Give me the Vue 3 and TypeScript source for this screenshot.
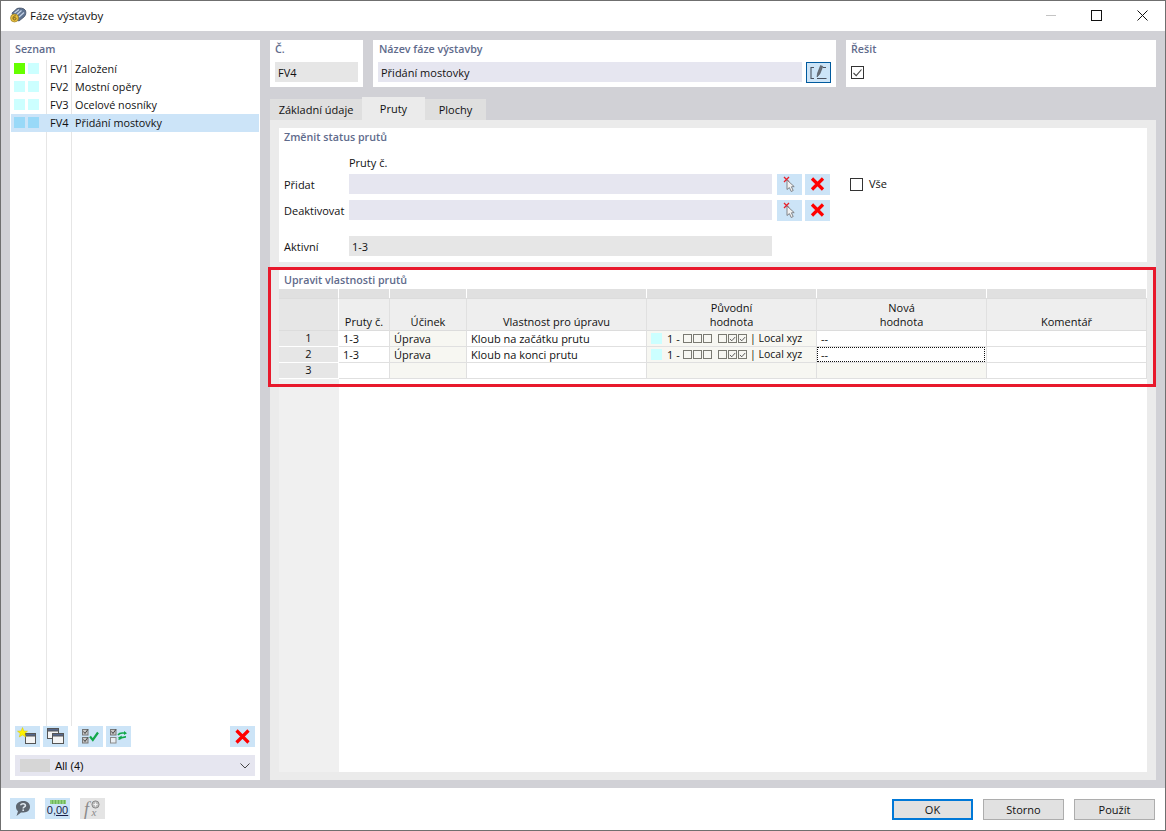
<script setup lang="ts">
interface Phase {
  code: string
  name: string
  first: string
  second: string
  selected?: boolean
}

interface MemberRow {
  no: number
  members: string
  effect: string
  property: string
  hasValue: boolean
  newValue: string
  focused?: boolean
}

const phases: Phase[] = [
  { code: 'FV1', name: 'Založení', first: '#66ff00', second: '#ccffff' },
  { code: 'FV2', name: 'Mostní opěry', first: '#ccffff', second: '#ccffff' },
  { code: 'FV3', name: 'Ocelové nosníky', first: '#ccffff', second: '#ccffff' },
  { code: 'FV4', name: 'Přidání mostovky', first: '#99d9f8', second: '#99d9f8', selected: true },
]

const memberRows: MemberRow[] = [
  { no: 1, members: '1-3', effect: 'Úprava', property: 'Kloub na začátku prutu', hasValue: true, newValue: '--' },
  { no: 2, members: '1-3', effect: 'Úprava', property: 'Kloub na konci prutu', hasValue: true, newValue: '--', focused: true },
  { no: 3, members: '', effect: '', property: '', hasValue: false, newValue: '' },
]

const releaseLeft = [false, false, false]
const releaseRight = [false, true, true]
const pickRows = ['Přidat', 'Deaktivovat']
</script>

<template>
  <div class="window">
    <header class="titlebar">
      <svg class="app-icon" width="18" height="16" viewBox="0 0 18 16">
        <path d="M3 6 L8 1.5 C11 0.5 15 1 16.5 3.5 C17.5 6 16.5 8.5 15 10 L10 14 L5 12 Z" fill="#5f7391" stroke="#39465c" stroke-width="0.7" />
        <path d="M5.5 6 L10 2.5 M7.5 8 L12.5 3.5 M10 10 L15 5.5" stroke="#c3d2e6" stroke-width="1.3" />
        <circle cx="5.5" cy="11" r="4" fill="#e8bf3e" stroke="#8f7420" stroke-width="0.6" />
        <path d="M6.8 8.8 C4.8 8.6 4 10 4 11.4 C4 13.4 7 13.4 7 11.6 C7 10.2 4.8 10.4 4.2 11.4" fill="none" stroke="#6b5512" stroke-width="0.9" />
      </svg>
      <span class="title-text">Fáze výstavby</span>
      <div class="win-controls">
        <span class="win-min"></span>
        <span class="win-max"></span>
        <svg class="win-close" width="11" height="11" viewBox="0 0 11 11">
          <path d="M0.5 0.5 L10.5 10.5 M10.5 0.5 L0.5 10.5" stroke="#111" stroke-width="1" />
        </svg>
      </div>
    </header>

    <main class="body">
      <aside class="list-panel">
        <div class="group-title list-title">Seznam</div>
        <div class="list">
          <div v-for="p in phases" :key="p.code" class="list-row" :class="{ selected: p.selected }">
            <span class="swatches">
              <i :style="{ background: p.first }"></i>
              <i :style="{ background: p.second }"></i>
            </span>
            <span class="list-code">{{ p.code }}</span>
            <span class="list-name">{{ p.name }}</span>
          </div>
        </div>
        <div class="list-tools">
          <button class="tool">
            <svg width="25" height="21" viewBox="0 0 25 21">
              <rect x="10.5" y="7.5" width="10" height="10" fill="#f4f4f4" stroke="#555" />
              <rect x="10.5" y="7.5" width="10" height="2.5" fill="#56688c" stroke="#555" />
              <path d="M7.5 1.5 L8.9 5 L12.5 5.2 L9.8 7.4 L10.7 11 L7.5 9 L4.3 11 L5.2 7.4 L2.5 5.2 L6.1 5 Z" fill="#fff200" stroke="#d6c400" stroke-width="0.5" />
            </svg>
          </button>
          <button class="tool">
            <svg width="25" height="21" viewBox="0 0 25 21">
              <rect x="4.5" y="2.5" width="11" height="10" fill="#f4f4f4" stroke="#555" />
              <rect x="4.5" y="2.5" width="11" height="2.5" fill="#56688c" stroke="#555" />
              <rect x="9.5" y="7.5" width="11" height="10" fill="#f4f4f4" stroke="#555" />
              <rect x="9.5" y="7.5" width="11" height="2.5" fill="#56688c" stroke="#555" />
            </svg>
          </button>
          <button class="tool tool-gap">
            <svg width="25" height="21" viewBox="0 0 25 21">
              <rect x="4.5" y="3.5" width="5.5" height="5.5" fill="#c8c8c8" stroke="#777" />
              <rect x="4.5" y="11.5" width="5.5" height="5.5" fill="#c8c8c8" stroke="#777" />
              <path d="M5.5 5.5 L7 7.5 L9.8 3.5 M5.5 13.5 L7 15.5 L9.8 11.5" fill="none" stroke="#333" stroke-width="0.9" />
              <path d="M12 10.5 L14.8 14 L20 6.5" fill="none" stroke="#12a84a" stroke-width="2.2" />
            </svg>
          </button>
          <button class="tool">
            <svg width="25" height="21" viewBox="0 0 25 21">
              <rect x="4.5" y="3.5" width="5.5" height="5.5" fill="#c8c8c8" stroke="#777" />
              <rect x="4.5" y="11.5" width="5.5" height="5.5" fill="#e8eef2" stroke="#8a8a8a" />
              <path d="M5.5 5.5 L7 7.5 L9.8 3.5" fill="none" stroke="#333" stroke-width="0.9" />
              <path d="M12 9 C14 6 16 7 19 7.2 M20 10.8 C17 11 15 11 12.5 13.5" fill="none" stroke="#12a84a" stroke-width="1.6" />
              <path d="M18 5 L21 7.2 L18 9 Z M16 9.5 L12 11.5 L15 13.5 Z" fill="#12a84a" />
            </svg>
          </button>
          <button class="tool tool-end">
            <svg width="25" height="21" viewBox="0 0 25 21">
              <path d="M6.5 4.5 L18.5 16.5 M18.5 4.5 L6.5 16.5" stroke="#f00" stroke-width="3.2" />
            </svg>
          </button>
        </div>
        <div class="filter">
          <span class="filter-swatch"></span>
          <span class="filter-text">All (4)</span>
          <svg class="chevron" width="10" height="6" viewBox="0 0 10 6">
            <path d="M0.5 0.5 L5 5 L9.5 0.5" fill="none" stroke="#444" />
          </svg>
        </div>
      </aside>

      <section class="detail">
        <div class="top-row">
          <div class="top-box box-no">
            <div class="group-title">Č.</div>
            <div class="field field-ro">FV4</div>
          </div>
          <div class="top-box box-name">
            <div class="group-title name-title">Název fáze výstavby</div>
            <div class="name-line">
              <div class="field field-edit name-field">Přidání mostovky</div>
              <button class="edit-btn">
                <svg width="21" height="17" viewBox="0 0 21 17">
                  <path d="M6 3.5 H3 V14.5 H6 M9 14.5 H18.5 M15 3.5 H18" fill="none" stroke="#4a5260" stroke-width="1.1" />
                  <path d="M9 13 L9.6 9 L12.5 1.5 L14.8 2.4 L11.8 10 Z" fill="#6b7078" stroke="#3a3f46" stroke-width="0.5" />
                </svg>
              </button>
            </div>
          </div>
          <div class="top-box box-solve">
            <div class="group-title">Řešit</div>
            <span class="check check-on">
              <svg width="11" height="11" viewBox="0 0 11 11">
                <path d="M1.5 6 L4.2 8.6 L9.5 2.5" fill="none" stroke="#444" stroke-width="1.1" />
              </svg>
            </span>
          </div>
        </div>

        <nav class="tabs">
          <span class="tab tab-first">Základní údaje</span>
          <span class="tab tab-active">Pruty</span>
          <span class="tab tab-last">Plochy</span>
        </nav>

        <div class="tab-page">
          <div class="status-panel">
            <div class="group-title">Změnit status prutů</div>
            <div class="column-label">Pruty č.</div>
            <div class="pick-block">
              <div class="pick-rows">
                <div v-for="label in pickRows" :key="label" class="pick-row">
                  <span class="row-label">{{ label }}</span>
                  <div class="field field-edit wide-field"></div>
                  <button class="pick-btn">
                    <svg width="25" height="21" viewBox="0 0 25 21">
                      <path d="M7 3 L12 8 M12 3 L7 8" stroke="#e8202a" stroke-width="1.3" />
                      <path d="M10 6 L10 15.5 L12.4 13.6 L14.2 17.5 L16.2 16.5 L14.4 12.8 L17.2 12.6 Z" fill="#f2f2f2" stroke="#77797d" stroke-width="0.9" />
                    </svg>
                  </button>
                  <button class="pick-btn">
                    <svg width="25" height="21" viewBox="0 0 25 21">
                      <path d="M7 4.5 L18 15.5 M18 4.5 L7 15.5" stroke="#f00" stroke-width="3.2" />
                    </svg>
                  </button>
                </div>
              </div>
              <label class="all-check">
                <span class="check"></span>
                <span class="all-text">Vše</span>
              </label>
            </div>
            <div class="pick-row active-row">
              <span class="row-label">Aktivní</span>
              <div class="field field-ro wide-field">1-3</div>
            </div>
          </div>

          <div class="edit-panel">
            <div class="group-title">Upravit vlastnosti prutů</div>
            <div class="grid">
              <div class="band band-corner"></div>
              <div v-for="n in 6" :key="n" class="band"></div>

              <div class="head head-corner"></div>
              <div class="head">Pruty č.</div>
              <div class="head">Účinek</div>
              <div class="head">Vlastnost pro úpravu</div>
              <div class="head">Původní<br />hodnota</div>
              <div class="head">Nová<br />hodnota</div>
              <div class="head">Komentář</div>

              <template v-for="row in memberRows" :key="row.no">
                <div class="row-no">{{ row.no }}</div>
                <div class="cell">{{ row.members }}</div>
                <div class="cell tinted">{{ row.effect }}</div>
                <div class="cell">{{ row.property }}</div>
                <div class="cell tinted value-cell">
                  <template v-if="row.hasValue">
                    <i class="value-swatch"></i>
                    <span class="value-no">1 -</span>
                    <span class="mini-group">
                      <span v-for="(on, i) in releaseLeft" :key="i" class="mini" :class="{ on }"></span>
                    </span>
                    <span class="mini-group mini-second">
                      <span v-for="(on, i) in releaseRight" :key="i" class="mini" :class="{ on }">
                        <svg v-if="on" width="8" height="8" viewBox="0 0 8 8">
                          <path d="M1 4 L3.2 6 L7 1.8" fill="none" stroke="#444" />
                        </svg>
                      </span>
                    </span>
                    <span class="value-text">| Local xyz</span>
                  </template>
                </div>
                <div class="cell" :class="{ tinted: !row.hasValue }">
                  <span v-if="row.focused" class="focus-cell">{{ row.newValue }}</span>
                  <template v-else>{{ row.newValue }}</template>
                </div>
                <div class="cell"></div>
              </template>
            </div>
            <div class="grid-rest"></div>
            <div class="highlight"></div>
          </div>
        </div>
      </section>
    </main>

    <footer class="footer">
      <button class="tool">
        <svg width="25" height="21" viewBox="0 0 25 21">
          <path d="M13.5 3 C17.5 3 20 5.5 20 8.8 C20 12.2 17.5 14.5 13.5 14.5 L11 14.5 L6.5 18 L8 13.2 C6.5 12 6 10.5 6 8.8 C6 5.5 9 3 13.5 3 Z" fill="#5d6670" />
          <path d="M10.8 7.2 C10.8 5.2 15.4 5.2 15.4 7.4 C15.4 9 13.2 8.8 13.2 10.4" fill="none" stroke="#dfe8f0" stroke-width="1.6" />
          <circle cx="13.2" cy="12.2" r="0.9" fill="#dfe8f0" />
        </svg>
      </button>
      <button class="tool units">
        <span class="ruler"></span>
        <span class="units-text">0,<u>00</u></span>
      </button>
      <button class="tool tool-off">
        <svg width="25" height="21" viewBox="0 0 25 21">
          <circle cx="15.5" cy="6.5" r="3.6" fill="#bdbdbd" stroke="#8a8a8a" />
          <path d="M13.5 6.5 H17.5 M15.5 4.5 V8.5" stroke="#f2f2f2" />
          <text x="4" y="17" class="fx-text">f</text>
          <text x="11.5" y="18" class="fx-text fx-small">x</text>
        </svg>
      </button>
      <div class="actions">
        <button class="action action-default">OK</button>
        <button class="action">Storno</button>
        <button class="action">Použít</button>
      </div>
    </footer>
  </div>
</template>

<style>
html,
body {
  margin: 0;
  background: #fff;
}
</style>

<style scoped>
.window {
  width: 1166px;
  height: 831px;
  box-sizing: border-box;
  border: 1px solid #6f6f6f;
  display: flex;
  flex-direction: column;
  background: #fff;
  font-family: "Open Sans", "Noto Sans", sans-serif;
  font-size: 11px;
  color: #111;
  overflow: hidden;
}
button {
  padding: 0;
  border: 0;
  font: inherit;
  color: inherit;
}
.titlebar {
  height: 30px;
  flex: none;
  display: flex;
  align-items: center;
  padding: 0 0 2px 8px;
  box-sizing: border-box;
}
.app-icon {
  margin-right: 3px;
}
.title-text {
  font-size: 11.5px;
}
.win-controls {
  margin-left: auto;
  display: flex;
  align-items: center;
  margin-right: 17px;
}
.win-min {
  width: 10px;
  height: 1px;
  background: #c4c4c4;
  margin-right: 35px;
}
.win-max {
  width: 9px;
  height: 9px;
  border: 1px solid #111;
  margin-right: 35px;
}
.body {
  flex: 1;
  min-height: 0;
  display: flex;
  gap: 10px;
  padding: 9px 9px 8px;
  background: #d1d1d6;
}
.group-title {
  color: #5f6b8c;
  font-weight: 600;
  font-size: 10.7px;
  line-height: 14px;
}
.list-panel {
  width: 250px;
  flex: none;
  background: #fff;
  display: flex;
  flex-direction: column;
  padding: 2px 5px 4px;
  box-sizing: border-box;
}
.list-title {
  height: 18px;
  line-height: 14px;
}
.list {
  flex: 1;
  margin: 0 -4px;
  background:
    linear-gradient(#e6e6e6, #e6e6e6) 35px 0 / 1px 100% no-repeat,
    linear-gradient(#e6e6e6, #e6e6e6) 60px 0 / 1px 100% no-repeat;
}
.list-row {
  height: 18px;
  display: flex;
  align-items: center;
  padding-bottom: 2px;
  box-sizing: border-box;
}
.list-row.selected {
  background: #cce4f8;
}
.swatches {
  width: 39px;
  display: flex;
  gap: 3px;
  padding-left: 3px;
  box-sizing: border-box;
}
.swatches i {
  width: 11px;
  height: 11px;
}
.list-code {
  width: 25px;
}
.list-name {
  font-size: 10.8px;
}
.list-tools {
  display: flex;
  gap: 3px;
  margin-bottom: 8px;
}
.tool {
  width: 25px;
  height: 21px;
  flex: none;
  background: #cce4f7;
  display: flex;
  align-items: center;
  justify-content: center;
}
.tool-gap {
  margin-left: 7px;
}
.tool-end {
  margin-left: auto;
}
.filter {
  height: 21px;
  background: #e6e6f0;
  display: flex;
  align-items: center;
  padding: 0 5px 0 5px;
}
.filter-swatch {
  width: 30px;
  height: 13px;
  background: #d6d6d6;
  margin-right: 5px;
}
.filter-text {
  font-family: "Liberation Sans", sans-serif;
  font-size: 11px;
}
.chevron {
  margin-left: auto;
}
.detail {
  flex: 1;
  min-width: 0;
  display: flex;
  flex-direction: column;
}
.top-row {
  display: flex;
  gap: 10px;
  height: 47px;
  flex: none;
}
.top-box {
  background: #fff;
  box-sizing: border-box;
  padding: 2px 5px 0;
}
.box-no {
  width: 93px;
}
.box-name {
  width: 463px;
}
.box-solve {
  flex: 1;
}
.name-title {
  padding-left: 1px;
}
.field {
  height: 20px;
  line-height: 19px;
  padding: 1px 0 0 3px;
  box-sizing: border-box;
}
.top-box .field {
  margin-top: 6px;
}
.field-ro {
  background: #e6e6e6;
}
.field-edit {
  background: #e6e6f0;
}
.name-line {
  display: flex;
  align-items: flex-start;
  gap: 4px;
}
.name-field {
  flex: 1;
}
.edit-btn {
  width: 25px;
  height: 21px;
  margin-top: 6px;
  box-sizing: border-box;
  border: 1px solid #005a9e;
  background: #cce4f7;
  display: flex;
  align-items: center;
  justify-content: center;
}
.check {
  width: 13px;
  height: 13px;
  box-sizing: border-box;
  border: 1px solid #333;
  display: inline-flex;
  align-items: center;
  justify-content: center;
  background: #fff;
}
.check-on {
  margin-top: 10px;
}
.tabs {
  height: 23px;
  flex: none;
  margin-top: 10px;
  display: flex;
  align-items: flex-end;
}
.tab {
  text-align: center;
  height: 21px;
  line-height: 21px;
  background: #dfdfdf;
}
.tab-first {
  width: 92px;
}
.tab-active {
  width: 63px;
  height: 23px;
  line-height: 23px;
  background: #ebebeb;
}
.tab-last {
  width: 61px;
}
.tab-page {
  flex: 1;
  min-height: 0;
  background: #ebebeb;
  padding: 8px 9px;
  display: flex;
  flex-direction: column;
  gap: 8px;
}
.status-panel {
  height: 134px;
  flex: none;
  background: #fff;
  box-sizing: border-box;
  padding: 2px 5px 0;
}
.column-label {
  margin: 12px 0 0 65px;
  line-height: 14px;
}
.pick-block {
  display: flex;
  align-items: flex-start;
  margin-top: 4px;
}
.pick-rows {
  display: flex;
  flex-direction: column;
  gap: 5px;
}
.pick-row {
  display: flex;
  align-items: flex-start;
  height: 21px;
}
.row-label {
  width: 65px;
  flex: none;
  line-height: 22px;
}
.wide-field {
  width: 423px;
}
.pick-btn {
  width: 25px;
  height: 21px;
  margin-left: 3px;
  background: #cce4f7;
  display: flex;
  align-items: center;
  justify-content: center;
}
.pick-btn:first-of-type {
  margin-left: 5px;
}
.all-check {
  display: flex;
  align-items: center;
  gap: 6px;
  margin: 4px 0 0 20px;
}
.all-text {
  line-height: 13px;
  margin-top: -2px;
}
.active-row {
  margin-top: 15px;
}
.edit-panel {
  flex: 1;
  min-height: 0;
  position: relative;
  background: #fff;
  display: flex;
  flex-direction: column;
}
.edit-panel > .group-title {
  padding: 3px 5px 0;
  height: 19px;
  box-sizing: border-box;
}
.grid {
  display: grid;
  grid-template-columns: 60px 51px 77px 180px 170px 170px 160px;
  grid-template-rows: 9px 33px 16px 16px 16px;
  flex: none;
  width: 868px;
}
.band {
  background: #e0e0e0;
  border-right: 1px solid #fff;
}
.band-corner {
  border-right: 1px solid #fff;
}
.head {
  background: #eeeeee;
  border-right: 1px solid #e0e0e0;
  border-bottom: 1px solid #dcdcdc;
  border-top: 1px solid #dcdcdc;
  display: flex;
  align-items: flex-end;
  justify-content: center;
  text-align: center;
  line-height: 14px;
  padding-bottom: 1px;
  box-sizing: border-box;
}
.head-corner {
  background: #e6e6e6;
  border-right: 1px solid #fff;
}
.row-no {
  background: #e6e6e6;
  border-bottom: 1px solid #fff;
  border-right: 1px solid #fff;
  text-align: center;
  line-height: 14px;
  box-sizing: border-box;
}
.cell {
  border-right: 1px solid #e0e0e0;
  border-bottom: 1px solid #e0e0e0;
  box-sizing: border-box;
  padding-left: 4px;
  line-height: 15px;
  white-space: nowrap;
  position: relative;
}
.tinted {
  background: #f7f7f2;
}
.value-cell {
  display: flex;
  align-items: center;
}
.value-swatch {
  width: 11px;
  height: 11px;
  background: #ccffff;
  margin-right: 5px;
}
.value-no {
  width: 16px;
  flex: none;
}
.mini-group {
  display: flex;
  gap: 1px;
}
.mini-second {
  margin-left: 6px;
}
.mini {
  width: 9px;
  height: 9px;
  box-sizing: border-box;
  border: 1px solid #7a7a72;
  display: flex;
  align-items: center;
  justify-content: center;
}
.value-text {
  margin-left: 3px;
  font-size: 10.5px;
}
.focus-cell {
  position: absolute;
  left: 0;
  top: 0;
  width: 168px;
  height: 15px;
  box-sizing: border-box;
  border: 1px dotted #111;
  padding-left: 3px;
  line-height: 13px;
}
.grid-rest {
  flex: 1;
  width: 60px;
  background: #f0f0f0;
}
.highlight {
  position: absolute;
  left: -11px;
  top: -3px;
  width: 888px;
  height: 120px;
  box-sizing: border-box;
  border: 3px solid #e8192c;
  pointer-events: none;
}
.footer {
  height: 42px;
  flex: none;
  display: flex;
  align-items: flex-start;
  gap: 10px;
  padding: 10px 10px 0 9px;
  box-sizing: border-box;
}
.units {
  flex-direction: column;
  justify-content: flex-start;
}
.ruler {
  width: 16px;
  height: 4px;
  margin-top: 2px;
  background: repeating-linear-gradient(90deg, #8fd07a 0 2px, #6fb45c 2px 3px);
}
.units-text {
  font-family: "Liberation Sans", sans-serif;
  font-size: 11px;
  line-height: 13px;
  color: #1a1f4a;
}
.tool-off {
  background: #e4e4e4;
}
.fx-text {
  font-family: "Liberation Serif", serif;
  font-style: italic;
  font-size: 18px;
  fill: #8a8a8a;
}
.fx-small {
  font-size: 11px;
}
.actions {
  margin-left: auto;
  display: flex;
  gap: 10px;
  margin-top: 1px;
}
.action {
  width: 81px;
  height: 21px;
  box-sizing: border-box;
  border: 1px solid #adadad;
  background: #e1e1e1;
  font-size: 11px;
}
.action-default {
  border: 2px solid #0078d7;
}
</style>
